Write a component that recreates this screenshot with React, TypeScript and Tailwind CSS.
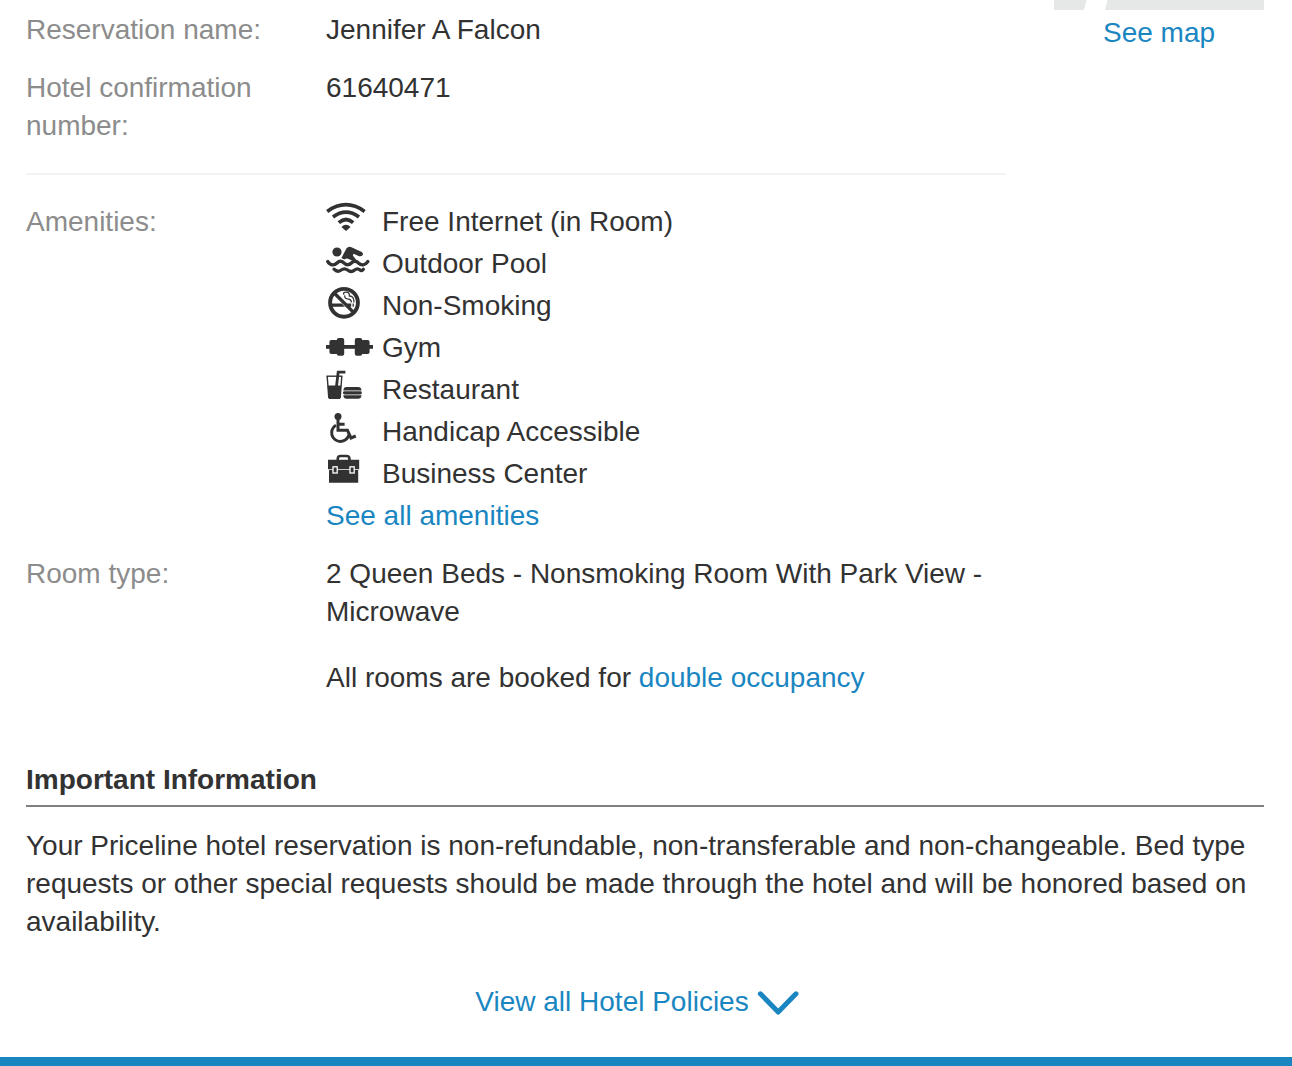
import type { ReactNode } from 'react';

const INK = '#323232';

function Icon({ children }: { children: ReactNode }) {
  return (
    <svg className="h-[42px] w-14 shrink-0" viewBox="0 0 56 42" fill="none" aria-hidden="true">
      {children}
    </svg>
  );
}

function WifiIcon() {
  return (
    <Icon>
      <path
        d="M1.2 10.4 Q20 -3 38.6 10.4 M7 16 Q20 6.2 33 16 M12.8 21.6 Q20 15.4 27.2 21.6"
        stroke={INK}
        strokeWidth="3.7"
      />
      <path d="M15.4 26 Q20 21.4 24.6 26 L20 30Z" fill={INK} />
    </Icon>
  );
}

function PoolIcon() {
  return (
    <Icon>
      <circle cx="11" cy="9" r="4.6" fill={INK} />
      <path
        d="M15.4 15 L20.4 5.6 Q22.4 3 25.4 4.2 L35.8 9 Q37.6 10.4 36.6 12.2 Q35.2 13.8 33.2 13.2 L27.6 10.8 L26.8 12.4 L30 16.4 Q27.4 18.6 24.8 17 Q21 14.2 18.4 16.4Z"
        fill={INK}
      />
      <path
        d="M1.8 18.6 C4.5 22.8 8.5 22.6 11 20 Q14.4 16.6 18 20 Q21.8 23.4 25.4 20 Q29 16.6 32.4 20 C35.4 22.8 39 22.6 41.8 18.6"
        stroke={INK}
        strokeWidth="3.4"
        strokeLinecap="round"
      />
      <path
        d="M8 26.2 Q11.4 29.8 15.2 27 Q18.4 24.6 21.6 27 Q25.2 30 28.6 27 Q31.6 24.6 34 27 Q35.6 28.6 37.4 26.2"
        stroke={INK}
        strokeWidth="3.2"
        strokeLinecap="round"
      />
    </Icon>
  );
}

function NoSmokingIcon() {
  return (
    <Icon>
      <path d="M5.4 18.4H15.6L18.9 21.8H5.4Z M20 18.4H25.2V21.8H23.4Z" fill={INK} />
      <path
        d="M18 9.6 Q16.8 7.3 19.4 7.2 Q23.8 6.8 23.4 11 Q28.2 11 28 17.4 M18.8 10.4 Q18.4 13.6 21.4 13.8 Q25.2 13.8 25.4 17.4"
        stroke={INK}
        strokeWidth="1.3"
      />
      <path d="M27.2 18.4V21.8" stroke={INK} strokeWidth="1.3" />
      <circle cx="18" cy="17.8" r="13.9" stroke={INK} strokeWidth="3.9" />
      <path d="M8.2 8 L27.8 27.6" stroke={INK} strokeWidth="3.4" />
    </Icon>
  );
}

function GymIcon() {
  return (
    <Icon>
      <g fill={INK}>
        <rect x="0" y="18" width="47" height="3.8" />
        <rect x="3.4" y="13" width="9" height="14" rx="2" />
        <rect x="10.8" y="11" width="7.4" height="17.8" rx="2" />
        <rect x="28.8" y="11" width="7.4" height="17.8" rx="2" />
        <rect x="34.6" y="13" width="9" height="14" rx="2" />
      </g>
    </Icon>
  );
}

function RestaurantIcon() {
  return (
    <Icon>
      <path d="M0.4 7.2H16.4" stroke={INK} strokeWidth="1.4" />
      <path d="M1.2 7.2L2.8 29M15.8 7.2L14.2 29" stroke={INK} strokeWidth="1.4" />
      <path d="M10.4 18L12.2 3.2H19.4" stroke={INK} strokeWidth="2.8" />
      <path d="M1.6 16.6H15.2L14.2 30H2.8Z" fill={INK} />
      <path
        d="M17.4 21.4V20.4Q17.8 18 20.6 18H32.2Q35 18 35.4 20.4V21.4Z M17.4 26.2H35.4V27Q35 29.8 32.2 29.8H20.6Q17.8 29.8 17.4 27Z"
        fill={INK}
      />
      <rect x="17" y="22.2" width="18.8" height="3.2" rx="1.4" fill={INK} />
    </Icon>
  );
}

function AccessibleIcon() {
  return (
    <Icon>
      <circle cx="12" cy="5.4" r="3.5" fill={INK} />
      <path
        d="M12 7V19.2H21.4L25 27L29.8 25M12 13.2H18.6"
        stroke={INK}
        strokeWidth="3"
      />
      <path
        d="M10 14.2 A8.7 8.7 0 1 0 22.8 24"
        stroke={INK}
        strokeWidth="2.9"
      />
    </Icon>
  );
}

function BusinessIcon() {
  return (
    <Icon>
      <path d="M11.8 7V5.4Q12 3 14.4 3H20.8Q23.2 3 23.4 5.4V7" stroke={INK} strokeWidth="2.6" />
      <path d="M2 6.8H33.2V16.2H2Z M3 17H32.2V29.8H3Z" fill={INK} />
      <g fill={INK} stroke="#ffffff" strokeWidth="1.3">
        <rect x="7" y="13.8" width="4.2" height="6.2" />
        <rect x="24" y="13.8" width="4.2" height="6.2" />
      </g>
    </Icon>
  );
}

const amenities = [
  { label: 'Free Internet (in Room)', icon: <WifiIcon /> },
  { label: 'Outdoor Pool', icon: <PoolIcon /> },
  { label: 'Non-Smoking', icon: <NoSmokingIcon /> },
  { label: 'Gym', icon: <GymIcon /> },
  { label: 'Restaurant', icon: <RestaurantIcon /> },
  { label: 'Handicap Accessible', icon: <AccessibleIcon /> },
  { label: 'Business Center', icon: <BusinessIcon /> },
];

function Row({ label, children }: { label: string; children: ReactNode }) {
  return (
    <div className="flex">
      <dt className="w-[300px] shrink-0 pr-8 text-[#8c8c8c]">{label}</dt>
      <dd className="min-w-0 flex-1">{children}</dd>
    </div>
  );
}

function Link({ children }: { children: ReactNode }) {
  return (
    <a href="#" className="text-[#1a86c1]">
      {children}
    </a>
  );
}

export default function App() {
  return (
    <div className="bg-white font-['Liberation_Sans',Arial,sans-serif] text-[28px] leading-[38px] text-[#323232]">
      <main className="pr-7 pb-9 pl-[26px]">
        <div className="flex gap-12">
          <div className="min-w-0 flex-1 pt-[11px]">
            <dl className="flex flex-col gap-5 border-b-2 border-[#f2f2f2] pb-7">
              <Row label="Reservation name:">Jennifer A Falcon</Row>
              <Row label="Hotel confirmation number:">61640471</Row>
            </dl>

            <dl className="flex flex-col gap-[18px] pt-7">
              <Row label="Amenities:">
                <ul className="-mt-0.5">
                  {amenities.map((a) => (
                    <li key={a.label} className="flex h-[42px] items-center">
                      {a.icon}
                      {a.label}
                    </li>
                  ))}
                  <li className="flex h-[42px] items-center">
                    <Link>See all amenities</Link>
                  </li>
                </ul>
              </Row>
              <Row label="Room type:">
                <p>2 Queen Beds - Nonsmoking Room With Park View - Microwave</p>
                <p className="mt-7">
                  All rooms are booked for <Link>double occupancy</Link>
                </p>
              </Row>
            </dl>
          </div>

          {/* Map thumbnail */}
          <aside className="w-[210px] shrink-0 text-center">
            <svg className="mb-1 block h-2.5 w-full" viewBox="0 0 210 10" aria-hidden="true">
              <path d="M0 0H32.5L30 10H0Z M53.5 0H210V10H51Z" fill="#e6e8e7" />
            </svg>
            <Link>See map</Link>
          </aside>
        </div>

        <section className="mt-16">
          <h2 className="border-b-2 border-[#808080] pb-1.5 font-bold">Important Information</h2>
          <p className="mt-5">
            Your Priceline hotel reservation is non-refundable, non-transferable and non-changeable.
            Bed type requests or other special requests should be made through the hotel and will be
            honored based on availability.
          </p>
        </section>

        <div className="mt-[42px] flex justify-center pr-4">
          <button type="button" className="flex items-center gap-2 text-[#1a86c1]">
            View all Hotel Policies
            <svg className="h-[38px] w-[42px]" viewBox="0 0 42 38" fill="none" aria-hidden="true">
              <path
                d="M3.4 10.8L21.2 29L39 10.8"
                stroke="currentColor"
                strokeWidth="5"
                strokeLinecap="round"
                strokeLinejoin="round"
              />
            </svg>
          </button>
        </div>
      </main>
      <div className="h-[9px] bg-[#1a86c1]" />
    </div>
  );
}
